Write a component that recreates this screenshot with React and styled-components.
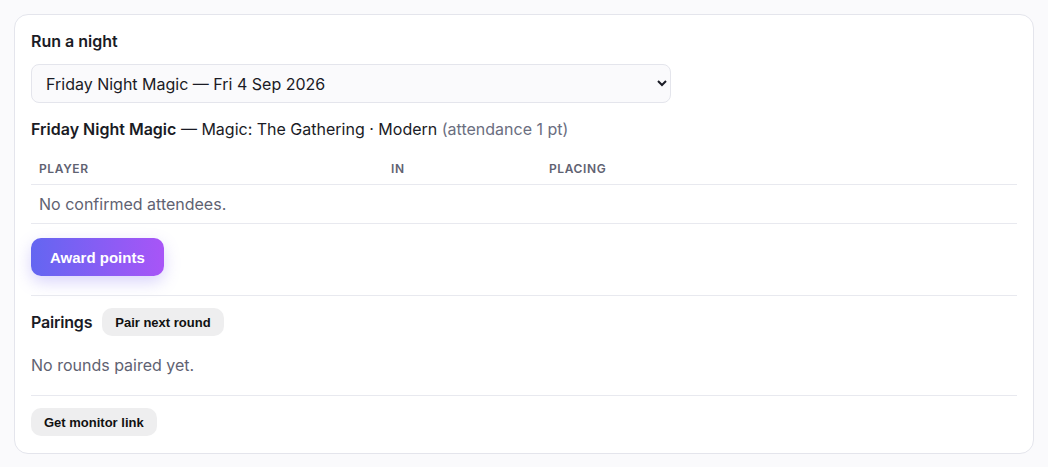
import React from 'react';
import styled, { createGlobalStyle } from 'styled-components';

const GlobalStyle = createGlobalStyle`
  body {
    margin: 0;
    background: #fafafc;
    font-family: Inter, 'Noto Sans', sans-serif;
    color: #1a1b25;
  }
`;

const Page = styled.div`
  padding: 14px 14px 13px 14px;
`;

const Card = styled.div`
  background: #ffffff;
  border: 1px solid #e4e5ec;
  border-radius: 14px;
  padding: 15px 16px 17px 16px;
  display: flex;
  flex-direction: column;
`;

const Title = styled.h2`
  margin: 0;
  font-size: 16px;
  font-weight: 600;
  line-height: 22px;
`;

const Select = styled.select`
  margin-top: 12px;
  width: 640px;
  height: 39px;
  border: 1px solid #e4e5ec;
  border-radius: 8px;
  background: #fafafc;
  font-family: Inter, sans-serif;
  font-size: 16px;
  color: #1a1b25;
  padding: 0 10px;
`;

const Info = styled.div`
  margin-top: 16px;
  font-size: 16px;
  line-height: 20px;
  b { font-weight: 600; }
`;

const Muted = styled.span`
  color: #6b6e80;
`;

const Table = styled.table`
  margin-top: 16px;
  width: 100%;
  border-collapse: collapse;
`;

const Th = styled.th`
  text-align: left;
  font-size: 12px;
  font-weight: 600;
  letter-spacing: 0.6px;
  color: #5f6272;
  text-transform: uppercase;
  padding: 6px 8px 8px;
  height: 29px;
  box-sizing: border-box;
  border-bottom: 1px solid #e8e9ef;
  width: ${p => p.w || 'auto'};
`;

const Td = styled.td`
  font-size: 16px;
  color: #5f6272;
  padding: 0 8px;
  height: 38px;
  border-bottom: 1px solid #e8e9ef;
`;

const PrimaryButton = styled.button`
  align-self: flex-start;
  margin-top: 14px;
  height: 38px;
  padding: 0 19px;
  border: none;
  border-radius: 10px;
  background: linear-gradient(90deg, #6366f1, #a855f7);
  box-shadow: 0 6px 16px rgba(120, 100, 240, 0.28);
  color: #ffffff;
  font-family: 'Liberation Sans', Arial, sans-serif;
  font-size: 15px;
  font-weight: 700;
`;

const Divider = styled.hr`
  width: 100%;
  margin: ${p => p.top || 18}px 0 0;
  border: none;
  border-top: 1px solid #e8e9ef;
`;

const Row = styled.div`
  display: flex;
  align-items: center;
  gap: 10px;
  margin-top: 12px;
`;

const SubTitle = styled.span`
  font-size: 16px;
  font-weight: 600;
  letter-spacing: -0.2px;
`;

const GreyButton = styled.button`
  align-self: flex-start;
  height: 28px;
  padding: 0 13px;
  border: none;
  border-radius: 10px;
  background: #eeeeef;
  color: #111111;
  font-family: 'Liberation Sans', Arial, sans-serif;
  font-size: 13px;
  font-weight: 700;
  margin-top: ${p => p.top || 0}px;
`;

const Empty = styled.p`
  margin: 18px 0 0;
  font-size: 16px;
  line-height: 22px;
  color: #5f6272;
`;

export default function App() {
  return (
    <Page>
      <GlobalStyle />
      <Card>
        <Title>Run a night</Title>
        <Select defaultValue="fnm">
          <option value="fnm">Friday Night Magic — Fri 4 Sep 2026</option>
        </Select>
        <Info>
          <b>Friday Night Magic</b> — Magic: The Gathering · Modern <Muted>(attendance 1 pt)</Muted>
        </Info>
        <Table>
          <thead>
            <tr>
              <Th w="352px">Player</Th>
              <Th w="158px">In</Th>
              <Th>Placing</Th>
            </tr>
          </thead>
          <tbody>
            <tr>
              <Td colSpan={3}>No confirmed attendees.</Td>
            </tr>
          </tbody>
        </Table>
        <PrimaryButton>Award points</PrimaryButton>
        <Divider top={19} />
        <Row>
          <SubTitle>Pairings</SubTitle>
          <GreyButton>Pair next round</GreyButton>
        </Row>
        <Empty>No rounds paired yet.</Empty>
        <Divider top={19} />
        <GreyButton top={12}>Get monitor link</GreyButton>
      </Card>
    </Page>
  );
}
